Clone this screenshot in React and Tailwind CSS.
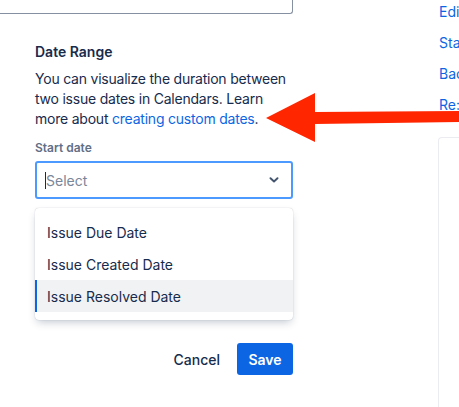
import React from 'react';

const font = { fontFamily: 'Inter, "Noto Sans", sans-serif' };

const options = ['Issue Due Date', 'Issue Created Date', 'Issue Resolved Date'];

const SideLinks = ['Edit', 'Status', 'Backlog', 'Re: issue'];

export default function App() {
  return (
    <div className="relative flex w-[459px] h-[407px] overflow-hidden bg-white" style={font}>
      {/* Form column */}
      <div className="w-[293px] shrink-0 pl-[35px]">
        <div className="-ml-[40px] h-[14px] border-b border-r border-[#8590A2] rounded-br-[3px]" />

        <h3 className="mt-[28px] text-[14px] leading-5 font-semibold text-[#172B4D]">Date Range</h3>
        <p className="mt-[7px] text-[14px] leading-5 text-[#172B4D] tracking-[-0.22px]">
          You can visualize the duration between two issue dates in Calendars. Learn more about{' '}
          <a className="text-[#0C66E4]" href="#">creating custom dates</a>.
        </p>

        <label className="block mt-[11px] text-[12px] leading-4 font-semibold text-[#626F86]">Start date</label>
        <div className="mt-[5px] h-[38px] border-2 border-[#4C9AFF] rounded-[3px] flex items-center pl-[8px] pr-[12px]">
          <span className="w-px h-[17px] bg-[#172B4D]" />
          <span className="text-[14px] text-[#7A869A]">Select</span>
          <svg className="ml-auto" width="10" height="6" viewBox="0 0 10 6" fill="none">
            <path d="M1.5 1.2 5 4.5 8.5 1.2" stroke="#44546F" strokeWidth="1.9" strokeLinecap="round" strokeLinejoin="round" />
          </svg>
        </div>

        <div className="mt-[9px] py-2 rounded-[4px] bg-white shadow-[0_4px_8px_-2px_rgba(9,30,66,0.25),0_0_1px_rgba(9,30,66,0.31)]">
          {options.map((o, i) => (
            <div
              key={o}
              className={
                i === 2
                  ? 'h-8 flex items-center pl-[10px] border-l-2 border-[#0C66E4] bg-[#F1F2F4] text-[14px] text-[#172B4D]'
                  : 'h-8 flex items-center pl-[12px] text-[14px] text-[#172B4D]'
              }
            >
              {o}
            </div>
          ))}
        </div>

        <div className="mt-[23px] flex justify-end gap-[5px]">
          <button className="h-8 px-3 text-[14px] font-medium text-[#172B4D]">Cancel</button>
          <button className="h-8 w-[56px] rounded-[3px] bg-[#0C66E4] text-[14px] font-semibold text-white">Save</button>
        </div>
      </div>

      {/* Right side column */}
      <div className="ml-[145px] flex-1 min-w-0 flex flex-col overflow-hidden">
        <div className="pt-[2px] pl-px flex flex-col gap-[11px] whitespace-nowrap">
          {SideLinks.map((l) => (
            <a key={l} href="#" className="text-[14px] leading-5 text-[#0C66E4]">{l}</a>
          ))}
        </div>
        <div className="mt-[22px] flex-1 w-[60px] border-l border-t border-[#EBECF0] rounded-tl-[4px]" />
      </div>

      {/* Annotation arrow */}
      <svg className="absolute left-0 top-0 pointer-events-none" width="459" height="407" viewBox="0 0 459 407">
        <path d="M266 118 L315 93 L315 112 L459 111 L459 122 L315 124 L315 142 Z" fill="#FF2600" />
      </svg>
    </div>
  );
}
